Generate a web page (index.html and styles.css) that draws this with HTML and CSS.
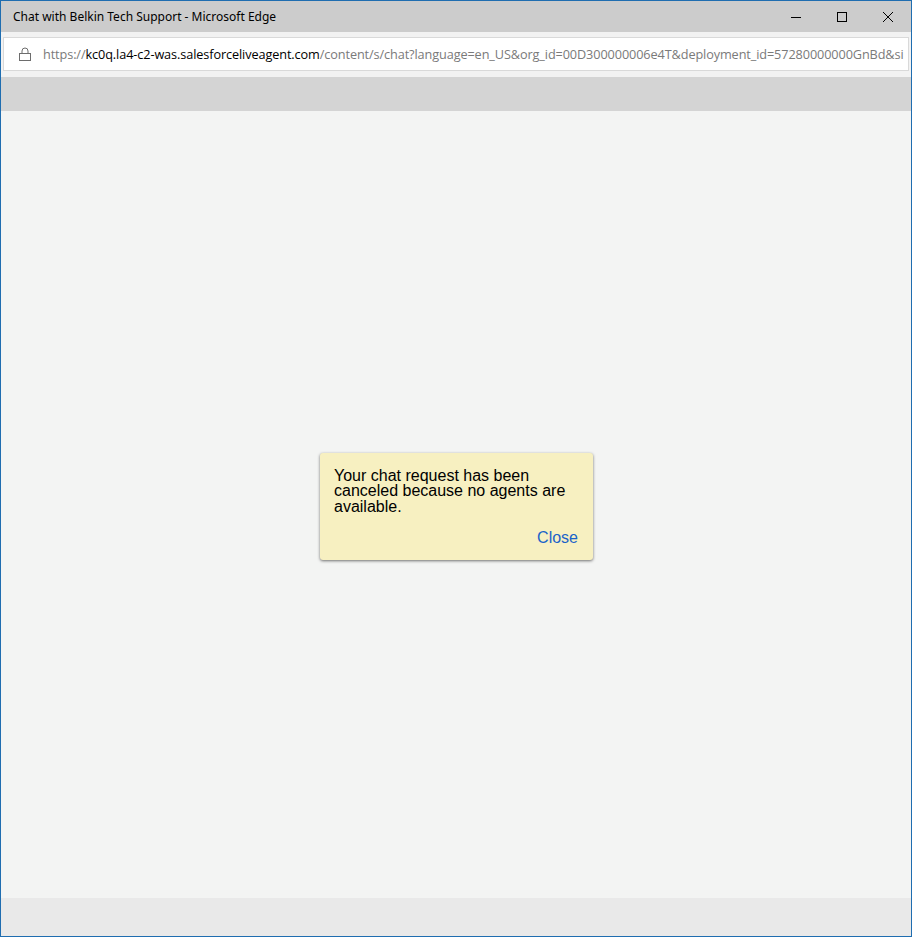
FILE: index.html
```html
<!DOCTYPE html>
<html lang="en">
<head>
    <meta charset="UTF-8">
    <title>Chat with Belkin Tech Support - Microsoft Edge</title>
    <link rel="stylesheet" href="styles.css">
</head>
<body>
    <div class="window">
        <div class="title-bar">
            <span class="title">Chat with Belkin Tech Support - Microsoft Edge</span>
            <div class="controls">
                <div class="ctrl">
                    <svg width="10" height="10" viewBox="0 0 10 10"><path d="M0 5.5h10" stroke="#000" stroke-width="1"/></svg>
                </div>
                <div class="ctrl">
                    <svg width="10" height="10" viewBox="0 0 10 10"><rect x="0.5" y="0.5" width="9" height="9" fill="none" stroke="#000" stroke-width="1"/></svg>
                </div>
                <div class="ctrl">
                    <svg width="10" height="10" viewBox="0 0 10 10"><path d="M0 0L10 10M10 0L0 10" stroke="#000" stroke-width="1"/></svg>
                </div>
            </div>
        </div>

        <div class="address-area">
            <div class="address-box">
                <svg class="lock" width="12" height="14" viewBox="0 0 12 14">
                    <path d="M3 6.5V4a3 3 0 0 1 6 0v2.5" fill="none" stroke="#6d6d6d" stroke-width="1"/>
                    <rect x="0.5" y="6.5" width="11" height="7" fill="none" stroke="#6d6d6d" stroke-width="1"/>
                </svg>
                <span class="url"><span class="dim">https://</span>kc0q.la4-c2-was.salesforceliveagent.com<span class="dim">/content/s/chat?language=en_US&amp;org_id=00D300000006e4T&amp;deployment_id=57280000000GnBd&amp;si</span></span>
            </div>
        </div>

        <div class="header-strip"></div>

        <div class="content">
            <div class="notice">
                <p class="notice-text">Your chat request has been canceled because no agents are available.</p>
                <div class="notice-actions">
                    <a class="close-link" href="#">Close</a>
                </div>
            </div>
        </div>

        <div class="footer-strip"></div>
    </div>
</body>
</html>
```

FILE: styles.css
```css
body {
    margin: 0;
    padding: 0;
    background-color: #f3f4f3;
}

.window {
    box-sizing: border-box;
    width: 912px;
    height: 937px;
    border: 1px solid #1f6db0;
    display: flex;
    flex-direction: column;
    overflow: hidden;
}

.title-bar {
    height: 31px;
    flex: none;
    background-color: #cccccc;
    display: flex;
    align-items: center;
    justify-content: space-between;
}

.title {
    font-family: "Noto Sans", "Open Sans", sans-serif;
    font-size: 12px;
    color: #000000;
    margin-left: 12px;
    margin-top: -1px;
}

.controls {
    display: flex;
    height: 100%;
}

.ctrl {
    width: 46px;
    height: 100%;
    display: flex;
    align-items: center;
    justify-content: center;
}

.address-area {
    height: 45px;
    flex: none;
    box-sizing: border-box;
    background-color: #f2f2f2;
    padding: 5px 2px 0 2px;
}

.address-box {
    box-sizing: border-box;
    height: 34px;
    background-color: #ffffff;
    border: 1px solid #d9d9d9;
    display: flex;
    align-items: center;
    overflow: hidden;
    white-space: nowrap;
}

.lock {
    margin-left: 15px;
    margin-right: 12px;
    flex: none;
}

.url {
    font-family: "Open Sans", "Noto Sans", sans-serif;
    font-size: 12.7px;
    color: #000000;
    letter-spacing: -0.1px;
}

.url .dim {
    color: #7a7a7a;
}

.header-strip {
    height: 34px;
    flex: none;
    background-color: #d4d4d4;
}

.content {
    flex: 1;
    background-color: #f3f4f3;
    display: flex;
    align-items: center;
    justify-content: center;
}

.notice {
    box-sizing: border-box;
    width: 273px;
    height: 107px;
    margin-top: 3px;
    margin-left: 1px;
    padding: 15px 14px 0 14px;
    background-color: #f7f0c1;
    border-radius: 3px;
    box-shadow: 0 1px 3px rgba(0, 0, 0, 0.55);
    font-family: "Liberation Sans", Arial, sans-serif;
}

.notice-text {
    margin: 0;
    font-size: 16px;
    line-height: 15.5px;
    color: #000000;
    padding-right: 8px;
}

.notice-actions {
    text-align: right;
    margin-top: 15px;
}

.close-link {
    font-size: 16px;
    color: #1a63c9;
    text-decoration: none;
    margin-right: 1px;
}

.footer-strip {
    height: 38px;
    flex: none;
    background-color: #e9e9e9;
}
```
